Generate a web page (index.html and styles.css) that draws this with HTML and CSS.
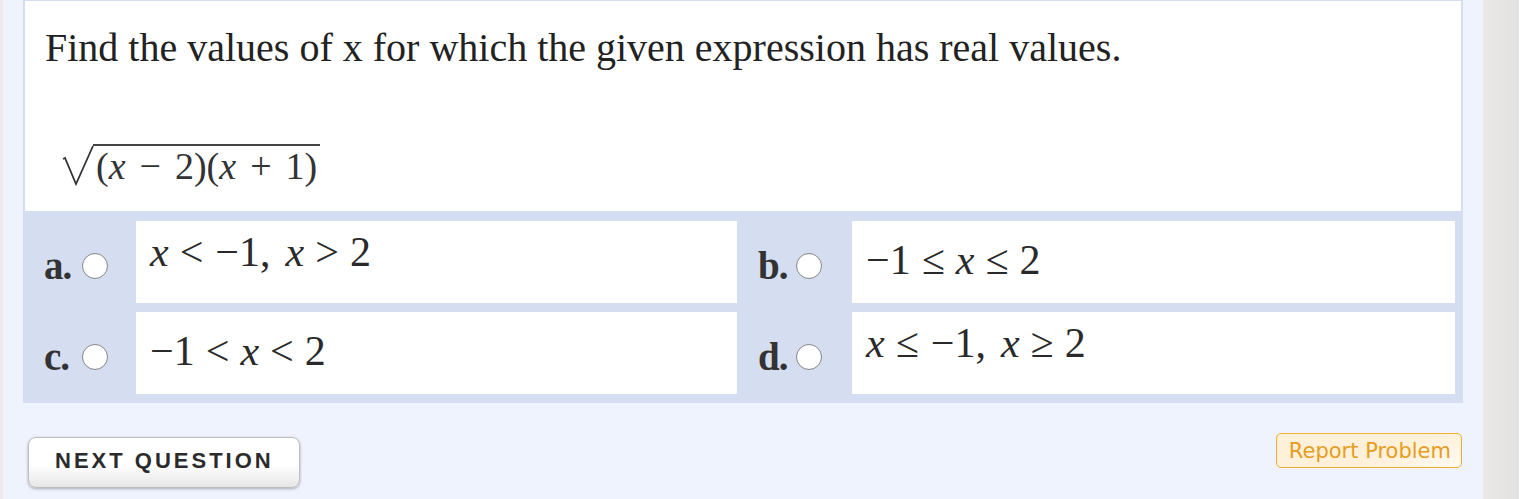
FILE: index.html
```html
<!DOCTYPE html>
<html>
<head>
<meta charset="utf-8">
<link rel="stylesheet" href="styles.css">
</head>
<body>
<div class="edge"></div>
<main class="main">
  <section class="question">
    <p class="prompt">Find the values of x for which the given expression has real values.</p>
    <div class="expr">
      <svg class="radical" width="32" height="42" viewBox="0 0 32 42"><polyline points="1,14 3,13 14,39 31,1" fill="none" stroke="#333" stroke-width="1.8"/></svg><span class="radicand">(<i>x</i><span class="op">−</span>2)(<i>x</i><span class="op">+</span>1)</span>
    </div>
  </section>
  <section class="answers">
    <div class="label"><b>a.</b><span class="radio"></span></div>
    <div class="choice hi"><i>x</i><span class="rel">&lt;</span><span class="neg">−1,</span><span class="sp"></span><i>x</i><span class="rel">&gt;</span>2</div>
    <div class="label"><b>b.</b><span class="radio"></span></div>
    <div class="choice lo">−1<span class="rel">≤</span><i>x</i><span class="rel">≤</span>2</div>
    <div class="label"><b>c.</b><span class="radio"></span></div>
    <div class="choice lo">−1<span class="rel">&lt;</span><i>x</i><span class="rel">&lt;</span>2</div>
    <div class="label"><b>d.</b><span class="radio"></span></div>
    <div class="choice hi"><i>x</i><span class="rel">≤</span><span class="neg">−1,</span><span class="sp"></span><i>x</i><span class="rel">≥</span>2</div>
  </section>
  <div class="actions">
    <button class="next">NEXT QUESTION</button>
    <button class="report">Report Problem</button>
  </div>
</main>
<div class="scroll"></div>
<div class="edge-r"></div>
</body>
</html>
```

FILE: styles.css
```css
html, body {
  margin: 0;
  height: 499px;
  overflow: hidden;
}
body {
  display: flex;
  background: #eef3fe;
  font-family: "Liberation Serif", "Times New Roman", serif;
  color: #222;
}
.edge {
  width: 3px;
  background: #eeebe9;
}
.main {
  width: 1440px;
  padding: 0 20px;
  display: flex;
  flex-direction: column;
}
.scroll {
  width: 36px;
  background: linear-gradient(to right, #ebe8e6, #e2e2e2);
}
.edge-r {
  flex: 1;
  background: #fff;
}
.question {
  background: #fff;
  border: 2px solid #d5ddf0;
  border-bottom: 0;
  border-top-width: 1px;
  height: 211px;
  box-sizing: border-box;
}
.prompt {
  margin: 0;
  padding: 24px 0 0 20px;
  font-size: 40px;
  line-height: 46px;
  color: #222;
}
i {
  font-family: "Liberation Serif", serif;
  font-style: italic;
}
.expr {
  display: flex;
  align-items: flex-start;
  margin: 67px 0 0 37px;
  font-size: 38px;
  color: #333;
}
.radical {
  display: block;
  margin-top: 7px;
}
.radicand {
  border-top: 2px solid #444;
  line-height: 40px;
  padding: 0 3px 0 3px;
  margin-top: 6px;
  margin-left: -1px;
}
.op {
  margin: 0 14px;
}
.answers {
  display: grid;
  grid-template-columns: 113px 601px 115px 603px;
  grid-auto-rows: 82px;
  row-gap: 9px;
  padding: 10px 8px 9px 0;
  background: #d5ddf0;
}
.label {
  display: flex;
  align-items: center;
  padding: 7px 0 0 21px;
  font-size: 39px;
  color: #333;
}
.label b {
  width: 38px;
  letter-spacing: -1px;
}
.radio {
  width: 24px;
  height: 24px;
  border-radius: 50%;
  border: 1px solid #888;
  background: radial-gradient(circle at 50% 40%, #fff 60%, #f2f2f2);
}
.choice {
  background: #fff;
  padding-left: 14px;
  font-size: 42px;
  color: #2a2a2a;
  line-height: 44px;
}
.choice.hi { padding-top: 9px; }
.choice.lo { padding-top: 17px; }
.rel {
  margin: 0 11px;
}
.neg {
  margin-left: 1px;
}
.sp {
  display: inline-block;
  width: 15px;
}
.actions {
  display: flex;
  justify-content: space-between;
  align-items: flex-start;
  padding: 30px 0 0 5px;
}
.next {
  margin-top: 4px;
  width: 272px;
  height: 51px;
  border: 1px solid #bdbdbd;
  border-radius: 8px;
  background: linear-gradient(#ffffff 55%, #e6e6e6);
  box-shadow: 0 1px 3px rgba(0,0,0,0.3);
  font-family: "Liberation Sans", Arial, sans-serif;
  font-weight: bold;
  font-size: 22px;
  letter-spacing: 3px;
  color: #2b2b2b;
  text-align: left;
  padding: 0 0 4px 26px;
}
.report {
  height: 35px;
  border: 1px solid #f5ad33;
  border-radius: 5px;
  background: linear-gradient(160deg, #fff0d9 60%, #fffaf2);
  font-family: "DejaVu Sans", Verdana, sans-serif;
  font-size: 21px;
  color: #e59d22;
  padding: 0 10px 0 12px;
  margin-right: 1px;
}
```
